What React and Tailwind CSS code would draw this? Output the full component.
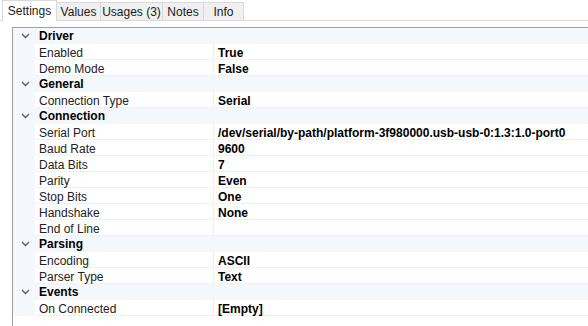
import React from 'react';

const tabs = ['Settings', 'Values', 'Usages (3)', 'Notes', 'Info'];
const tabWidths = ['w-[55px]', 'w-[44px]', 'w-[62px]', 'w-[41px]', 'w-[40px]'];

const groups = [
    { name: 'Driver', rows: [['Enabled', 'True'], ['Demo Mode', 'False']] },
    { name: 'General', rows: [['Connection Type', 'Serial']] },
    {
        name: 'Connection',
        rows: [
            ['Serial Port', '/dev/serial/by-path/platform-3f980000.usb-usb-0:1.3:1.0-port0'],
            ['Baud Rate', '9600'],
            ['Data Bits', '7'],
            ['Parity', 'Even'],
            ['Stop Bits', 'One'],
            ['Handshake', 'None'],
            ['End of Line', ''],
        ],
    },
    { name: 'Parsing', rows: [['Encoding', 'ASCII'], ['Parser Type', 'Text']] },
    { name: 'Events', rows: [['On Connected', '[Empty]']] },
];

const Chevron = () => (
    <svg width="9" height="6" viewBox="0 0 9 6" className="ml-[8px] mr-[9px]">
        <path d="M1 1 L4.5 4.5 L8 1" fill="none" stroke="#5a5a5a" strokeWidth="1.3" />
    </svg>
);

const App = () => {
    return (
        <div className="w-[588px] h-[326px] bg-white overflow-hidden text-[12px] text-[#1b1b1b]" style={{ fontFamily: '"Liberation Sans", Arial, sans-serif' }}>
            {/* tab strip */}
            <div className="flex items-end h-[21px] pl-[2px] border-b border-[#d9d9d9]">
                {tabs.map((t, i) => (
                    <div
                        key={t}
                        className={`${tabWidths[i]} flex items-center justify-center ${
                            i === 0
                                ? 'h-[21px] bg-white border-t border-l border-r border-[#d9d9d9] -mb-px'
                                : 'h-[18px] bg-[#f0f0f0] border-t border-r border-[#d9d9d9]'
                        }`}
                    >
                        {t}
                    </div>
                ))}
            </div>

            {/* property grid */}
            <div className="ml-[12px] mt-[6px] h-[300px] border-l border-t border-[#a0a0a0]">
                {groups.map((g) => (
                    <div key={g.name}>
                        <div className="h-[16px] flex items-center bg-[#f4f7fc] font-bold text-black">
                            <Chevron />
                            <span>{g.name}</span>
                        </div>
                        {g.rows.map(([k, v]) => (
                            <div key={k} className="h-[16px] flex bg-[#f4f7fc]">
                                <div className="w-[22px] shrink-0" />
                                <div className="w-[178px] shrink-0 bg-white border-b border-[#eef2f8] pl-[4px] pt-[1px] leading-[16px] text-[#222]">
                                    {k}
                                </div>
                                <div className="flex-1 bg-white border-l border-b border-[#eef2f8] pl-[4px] pt-[1px] leading-[16px] font-bold text-black whitespace-nowrap">
                                    {v}
                                </div>
                            </div>
                        ))}
                    </div>
                ))}
            </div>
        </div>
    );
};

export default App;
